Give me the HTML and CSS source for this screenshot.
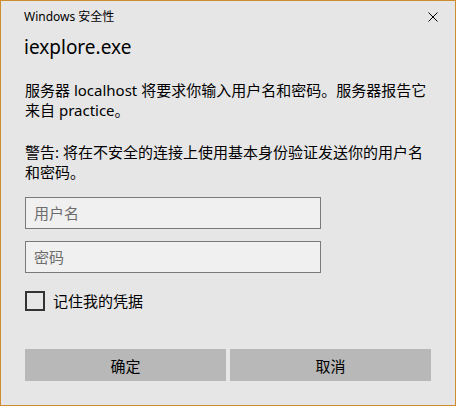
FILE: index.html
```html
<!DOCTYPE html>
<html lang="zh-CN">
<head>
<meta charset="utf-8">
<title>Windows 安全性</title>
<link rel="stylesheet" href="styles.css">
</head>
<body>
<div class="window">
  <div class="titlebar">
    <span class="title">Windows 安全性</span>
    <svg class="close" width="10" height="10" viewBox="0 0 10 10" aria-label="关闭">
      <path d="M0.5 0.5 L9.5 9.5 M9.5 0.5 L0.5 9.5" stroke="#000" stroke-width="1" fill="none"/>
    </svg>
  </div>
  <h1 class="app">iexplore.exe</h1>
  <p class="msg">服务器 localhost 将要求你输入用户名和密码。服务器报告它来自 practice。</p>
  <p class="msg warn">警告: 将在不安全的连接上使用基本身份验证发送你的用户名和密码。</p>
  <div class="fields">
    <input class="field" type="text" placeholder="用户名">
    <input class="field" type="password" placeholder="密码">
  </div>
  <label class="remember">
    <span class="box"></span>
    <span class="label">记住我的凭据</span>
  </label>
  <div class="buttons">
    <button class="btn">确定</button>
    <button class="btn">取消</button>
  </div>
</div>
</body>
</html>
```

FILE: styles.css
```css
html, body {
  margin: 0;
  padding: 0;
}

body {
  font-family: "Noto Sans", "Noto Sans CJK SC", sans-serif;
  color: #000;
  background: #e6e6e6;
}

.window {
  box-sizing: border-box;
  width: 456px;
  height: 406px;
  border: 1px solid #d08b2f;
  background: #e6e6e6;
  padding: 0 24px;
}

.titlebar {
  display: flex;
  justify-content: space-between;
  align-items: center;
  height: 32px;
}

.title {
  font-size: 12px;
  line-height: 16px;
  margin-left: -1px;
}

.close {
  display: block;
  margin-right: -7px;
}

.app {
  margin: 0;
  font-size: 19px;
  font-weight: 400;
  line-height: 28px;
  height: 28px;
  margin-left: -1px;
}

.msg {
  margin: 19px 0 0;
  font-size: 15px;
  line-height: 20px;
  width: 406px;
}

.msg.warn {
  margin-top: 22px;
}

.fields {
  display: flex;
  flex-direction: column;
  gap: 12px;
  margin-top: 15px;
}

.field {
  box-sizing: border-box;
  width: 296px;
  height: 32px;
  margin: 0;
  padding: 0 8px;
  border: 1px solid #7a7a7a;
  background: #f0f0f0;
  font-family: "Noto Sans", "Noto Sans CJK SC", sans-serif;
  font-size: 15px;
  color: #000;
  outline: none;
}

.field::placeholder {
  color: #6d6d6d;
  opacity: 1;
}

.remember {
  display: flex;
  align-items: center;
  margin-top: 18px;
  height: 20px;
}

.box {
  box-sizing: border-box;
  width: 20px;
  height: 20px;
  border: 2px solid #333;
}

.label {
  margin-left: 8px;
  font-size: 15px;
  line-height: 20px;
}

.buttons {
  display: grid;
  grid-template-columns: 1fr 1fr;
  gap: 4px;
  margin-top: 38px;
}

.btn {
  height: 32px;
  margin: 0;
  padding: 0;
  border: none;
  background: #b8b8b8;
  font-family: "Noto Sans", "Noto Sans CJK SC", sans-serif;
  font-size: 15px;
  color: #000;
}
```
